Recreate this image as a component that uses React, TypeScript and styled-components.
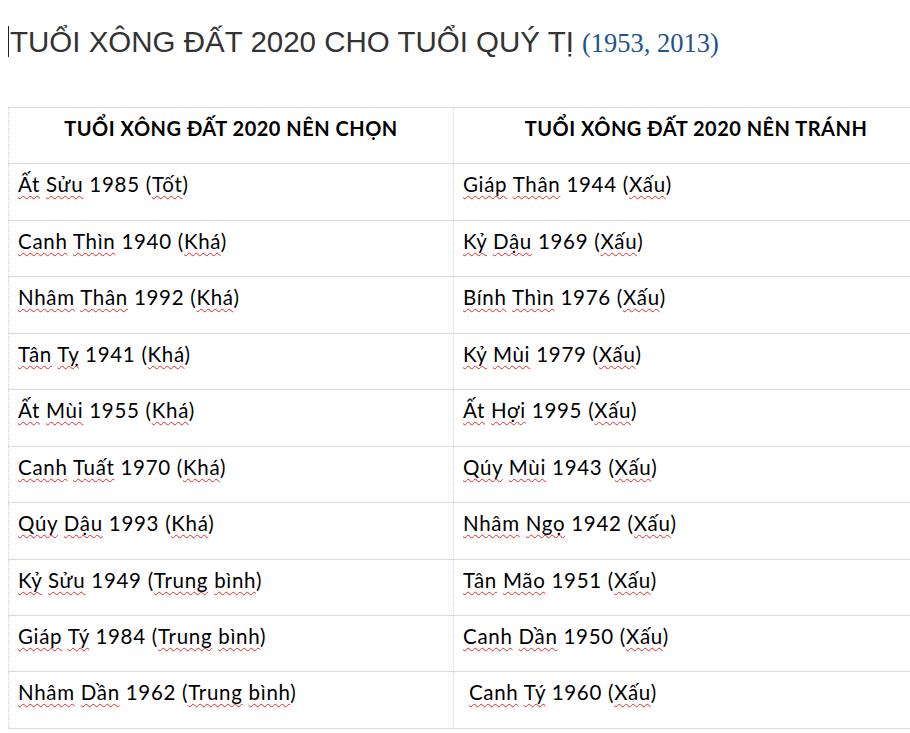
import React from "react"
import styled, { createGlobalStyle } from "styled-components"

/* ================================
   Bảng tuổi xông đất 2020 — tuổi Quý Tỵ
   ================================ */

const GlobalStyle = createGlobalStyle`
    html, body {
        margin: 0;
        padding: 0;
        background: #ffffff;
        overflow: hidden;
    }
`

const colors = {
    text: "#000000",
    title: "#333333",
    years: "#21538b",
    line: "#d9d8dd",
    dots: "#d4d4d4",
    squiggle: "#e8262b",
}

const NEN_CHON = [
    "Ất Sửu 1985 (Tốt)",
    "Canh Thìn 1940 (Khá)",
    "Nhâm Thân 1992 (Khá)",
    "Tân Tỵ 1941 (Khá)",
    "Ất Mùi 1955 (Khá)",
    "Canh Tuất 1970 (Khá)",
    "Qúy Dậu 1993 (Khá)",
    "Kỷ Sửu 1949 (Trung bình)",
    "Giáp Tý 1984 (Trung bình)",
    "Nhâm Dần 1962 (Trung bình)",
]

const NEN_TRANH = [
    "Giáp Thân 1944 (Xấu)",
    "Kỷ Dậu 1969 (Xấu)",
    "Bính Thìn 1976 (Xấu)",
    "Kỷ Mùi 1979 (Xấu)",
    "Ất Hợi 1995 (Xấu)",
    "Qúy Mùi 1943 (Xấu)",
    "Nhâm Ngọ 1942 (Xấu)",
    "Tân Mão 1951 (Xấu)",
    "Canh Dần 1950 (Xấu)",
    " Canh Tý 1960 (Xấu)",
]

/* ================================
   Styled Components
   ================================ */

const Page = styled.div`
    width: 910px;
    height: 733px;
    padding-top: 24px;
    box-sizing: border-box;
`

const TitleLine = styled.h1`
    position: relative;
    margin: 0 0 0 10px;
    font-weight: normal;
    white-space: nowrap;
    line-height: 34px;
`

const Cursor = styled.span`
    position: absolute;
    left: -2px;
    top: 2px;
    width: 1px;
    height: 31px;
    background: #222;
`

const TitleMain = styled.span`
    font-family: "Liberation Sans", Arial, sans-serif;
    font-size: 29.5px;
    color: ${colors.title};
`

const TitleYears = styled.span`
    font-family: "Liberation Serif", "Times New Roman", serif;
    font-size: 26.5px;
    color: ${colors.years};
`

const Table = styled.table`
    margin: 47px 0 0 8px;
    width: 930px;
    border-collapse: collapse;
    table-layout: fixed;
    font-family: Lato, "Noto Sans", sans-serif;
    color: ${colors.text};
`

const Col = styled.col<{ $w: number }>`
    width: ${(p) => p.$w}px;
`

const Row = styled.tr`
    height: 56.45px;
    border-top: 1px solid ${colors.line};
    border-bottom: 1px solid ${colors.line};
`

const HeadCell = styled.th`
    vertical-align: top;
    padding: 7px 9px 0;
    font-size: 20px;
    font-weight: 700;
    letter-spacing: 0.5px;
    text-align: center;
    line-height: 26px;
    border-left: 1px dotted ${colors.dots};
    border-right: 1px dotted ${colors.dots};
`

const Cell = styled.td`
    vertical-align: top;
    padding: 7px 9px 0 9px;
    font-size: 20.5px;
    letter-spacing: 0.7px;
    line-height: 26px;
    white-space: pre;
    border-left: 1px dotted ${colors.dots};
    border-right: 1px dotted ${colors.dots};
`

/* Gạch đỏ lượn sóng của trình kiểm tra chính tả */
const Squiggle = styled.span`
    text-decoration: underline wavy ${colors.squiggle};
    text-decoration-thickness: 1px;
    text-underline-offset: 3px;
    text-decoration-skip-ink: none;
`

/* Tách một dòng thành chữ và số, gạch chân các từ chữ */
function SpellText({ text }: { text: string }) {
    const parts = text.split(/(\s+|\(|\)|\d+)/).filter((p) => p !== "")
    return (
        <>
            {parts.map((p, i) =>
                /^[^\s()\d]+$/.test(p) ? (
                    <Squiggle key={i}>{p}</Squiggle>
                ) : (
                    <React.Fragment key={i}>{p}</React.Fragment>
                )
            )}
        </>
    )
}

/* ================================
   Componente principal
   ================================ */

export default function App() {
    return (
        <Page>
            <GlobalStyle />

            <TitleLine>
                <Cursor />
                <TitleMain>TUỔI XÔNG ĐẤT 2020 CHO TUỔI QUÝ TỊ</TitleMain>{" "}
                <TitleYears>(1953, 2013)</TitleYears>
            </TitleLine>

            <Table>
                <colgroup>
                    <Col $w={445} />
                    <Col $w={485} />
                </colgroup>
                <tbody>
                    <Row>
                        <HeadCell>TUỔI XÔNG ĐẤT 2020 NÊN CHỌN</HeadCell>
                        <HeadCell>TUỔI XÔNG ĐẤT 2020 NÊN TRÁNH</HeadCell>
                    </Row>
                    {NEN_CHON.map((chon, i) => (
                        <Row key={chon}>
                            <Cell>
                                <SpellText text={chon} />
                            </Cell>
                            <Cell>
                                <SpellText text={NEN_TRANH[i]} />
                            </Cell>
                        </Row>
                    ))}
                </tbody>
            </Table>
        </Page>
    )
}
